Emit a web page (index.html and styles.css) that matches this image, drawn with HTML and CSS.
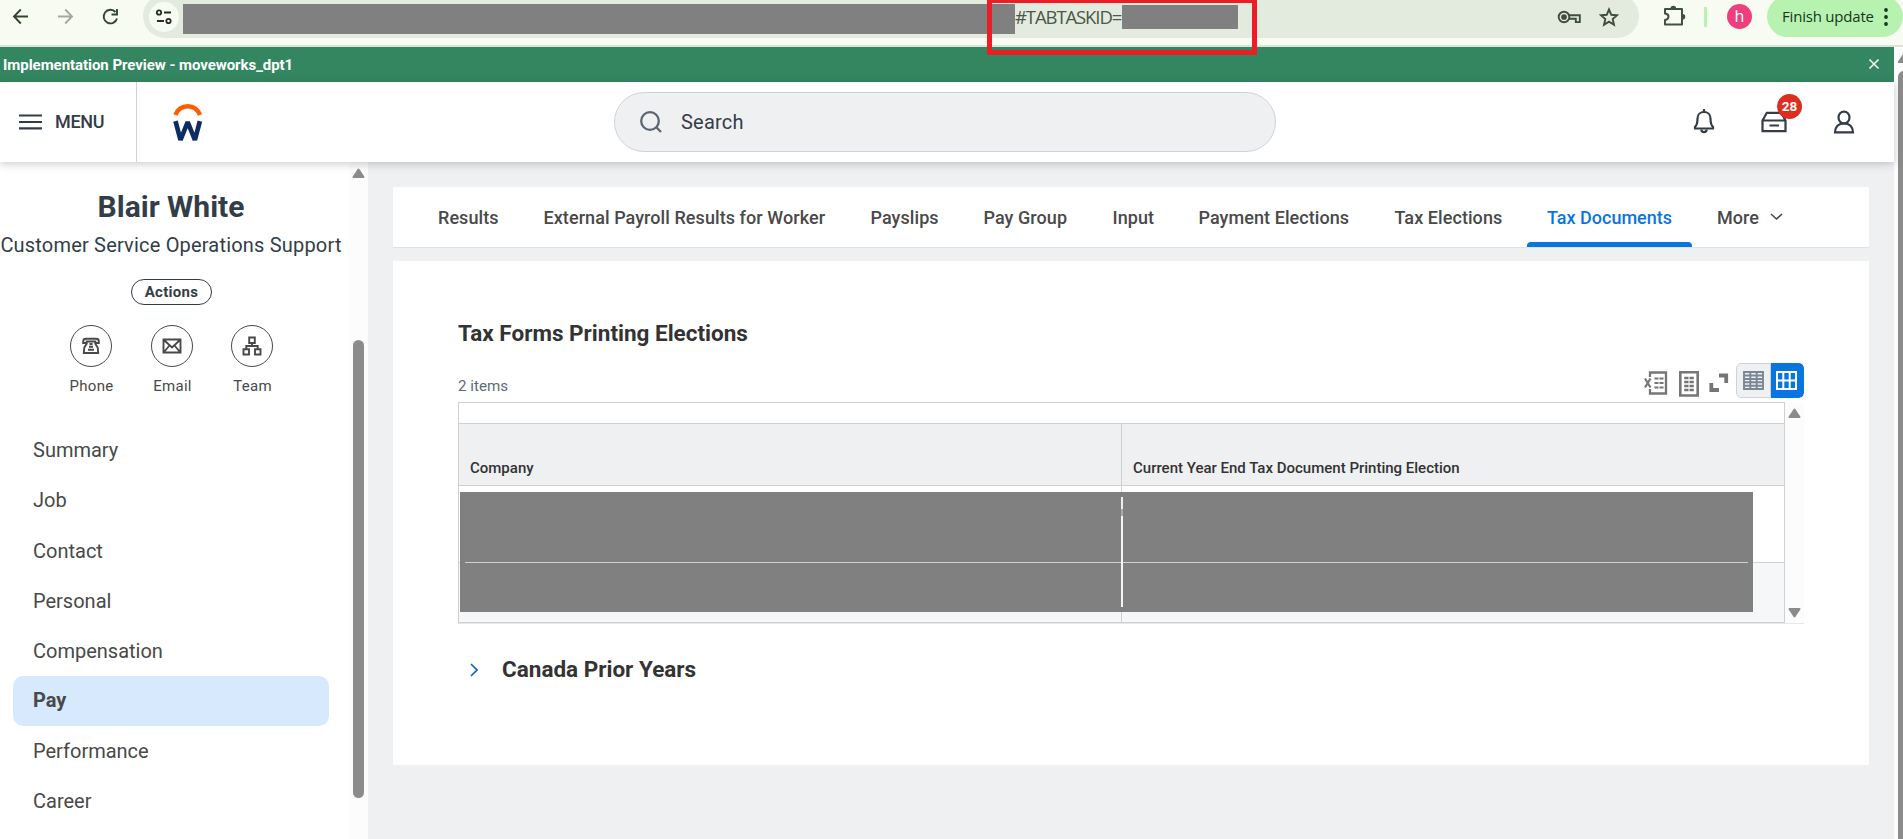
FILE: index.html
```html
<!DOCTYPE html>
<html lang="en">
<head>
<meta charset="utf-8">
<title>Blair White - Pay</title>
<link rel="stylesheet" href="styles.css">
</head>
<body>
<div class="browser">
  <svg class="nav-icons" width="143" height="45" viewBox="0 0 143 45" fill="none" stroke-width="1.9">
    <path stroke="#34452f" d="M28 16.5H14M20.8 9.5L14 16.5l6.800 7"/>
    <path stroke="#a3a99f" d="M58 16.500h14M65.200 9.500l6.800 7-6.800 7"/>
    <path stroke="#34452f" d="M117 18.500a6.800 6.800 0 1 1-1.500-6.500M117 9v5.500h-5.500"/>
  </svg>
  <div class="omnibox">
    <div class="site-info">
      <svg width="18" height="18" viewBox="0 0 18 18" fill="none" stroke="#20301d" stroke-width="1.800"><circle cx="4" cy="4.500" r="2.200"/><path d="M9 4.500h7M2 13h7"/><circle cx="13.500" cy="13" r="2.200"/></svg>
    </div>
    <div class="mask mask-url"></div>
    <span class="url-text">#TABTASKID=</span>
    <div class="mask mask-id"></div>
    <svg class="omni-icons" width="64" height="24" viewBox="0 0 64 24" fill="none" stroke="#3f4d3c" stroke-width="1.900">
      <circle cx="7" cy="12" r="5.300"/><circle cx="7" cy="12" r="1.900" fill="#3f4d3c"/>
      <path d="M12 10.200h10.800v6.900h-4v-3.400H12"/>
      <path d="M52 4.500l2.300 5.300 5.700.500-4.300 3.800 1.300 5.600-5-3-5 3 1.300-5.600-4.300-3.800 5.700-.500z"/>
    </svg>
  </div>
  <svg class="puzzle" width="24" height="24" viewBox="0 0 24 24"><path fill="none" stroke="#42503f" stroke-width="2" stroke-linejoin="round" d="M3 5h17v15.500H3V16c2.500-.500 3.500-1.700 3.500-3.300S5.500 9.800 3 9.500z"/><path fill="#42503f" d="M8.500 4.500a2.800 2.800 0 0 1 5.600 0zM20.500 10a2.800 2.800 0 0 1 0 5.600z"/></svg>
  <div class="separator"></div>
  <div class="avatar">h</div>
  <div class="update"><span>Finish update</span><svg width="4" height="20" viewBox="0 0 4 20" fill="#17361b"><circle cx="2" cy="3" r="1.900"/><circle cx="2" cy="10" r="1.900"/><circle cx="2" cy="17" r="1.900"/></svg></div>
  <div class="highlight"></div>
</div>

<div class="viewport">
  <div class="page">
    <div class="banner"><span>Implementation Preview - moveworks_dpt1</span>
      <svg width="12" height="12" viewBox="0 0 12 12" stroke="#fff" stroke-width="1.500"><path d="M1.500 1.500l9 9M10.500 1.500l-9 9"/></svg>
    </div>
    <header class="header">
      <div class="menu">
        <svg width="23" height="16" viewBox="0 0 23 16" stroke="#333d47" stroke-width="2.200"><path d="M0 1.500h23M0 8h23M0 14.300h23"/></svg>
        <span>MENU</span>
      </div>
      <svg class="logo" width="30" height="39" viewBox="0 0 30 39" fill="none"><path stroke="#ff5c00" stroke-width="4.400" d="M2.400 12C4.800 6.200 9.400 3.200 14.700 3.200S24.600 6.200 27 12"/><path stroke="#0e2c63" stroke-width="4.700" stroke-linejoin="bevel" d="M2.500 18.200L7.500 37 14.700 19 21.900 37l5-18.800"/></svg>
      <div class="search">
        <svg width="24" height="24" viewBox="0 0 24 24" fill="none" stroke="#5c6670" stroke-width="2.300"><circle cx="11" cy="11" r="8.800"/><path d="M17.300 17.300L22 22"/></svg>
        <span>Search</span>
      </div>
      <div class="tools">
        <svg width="22" height="26" viewBox="0 0 22 26" fill="none" stroke="#333d47" stroke-width="2.200"><path d="M2 20.500v-1.700c2-1.500 2.500-3.800 2.500-8.300C4.500 6.500 7.400 4 11 4s6.500 2.500 6.500 6.500c0 4.500.500 6.800 2.500 8.300v1.700z"/><path d="M11 4V1M8.300 21.500c0 3.400 5.400 3.400 5.400 0"/></svg>
        <div class="inbox">
          <svg width="26" height="22" viewBox="0 0 26 22" fill="none" stroke="#333d47" stroke-width="2.200"><path d="M1.500 9.500L5.800 1.800h14.400l4.300 7.700v10.700h-23zM1.500 9.500h23M8.500 14.500h9.500"/></svg>
          <span class="badge">28</span>
        </div>
        <svg width="22" height="24" viewBox="0 0 22 24" fill="none" stroke="#333d47" stroke-width="2.200"><ellipse cx="11" cy="7.600" rx="5.500" ry="6"/><path d="M2 22.300C2 17 5.500 13.300 11 13.300s9 3.700 9 9z"/></svg>
      </div>
    </header>

    <div class="body">
      <aside class="sidebar">
        <div class="profile">
          <h1 class="name">Blair White</h1>
          <div class="role">Customer Service Operations Support</div>
          <div class="actions">Actions</div>
          <div class="contacts">
            <div class="contact"><div class="ring"><svg width="18" height="18" viewBox="0 0 18 18" fill="none" stroke="#494949" stroke-width="1.900"><path d="M1.200 6V4.300C1.200 2.500 2.500 1.800 4 1.800h10c1.500 0 2.800.700 2.800 2.500V6h-3.500V4.500H4.700V6zM5 6.200L2.300 10.500 1.800 16h14.400l-.500-5.500L13 6.200M7.500 7h3M7 9.800h4M6 12.700h6"/></svg></div><span>Phone</span></div>
            <div class="contact"><div class="ring"><svg width="20" height="16" viewBox="0 0 20 16" fill="none" stroke="#494949" stroke-width="1.900"><path d="M1.500 1.500h17v13h-17zM2 2l8 7.500L18 2M2 14l5.500-6.500M18 14l-5.500-6.500"/></svg></div><span>Email</span></div>
            <div class="contact"><div class="ring"><svg width="20" height="20" viewBox="0 0 20 20" fill="none" stroke="#494949" stroke-width="1.900"><path d="M7.200 1.500h5.600v5.500H7.200zM1.500 13.200h5.500v5.300H1.500zM13 13.200h5.500v5.300H13zM10 7v3M4.300 13v-3h11.400v3"/></svg></div><span>Team</span></div>
          </div>
          <nav class="nav">
            <a>Summary</a><a>Job</a><a>Contact</a><a>Personal</a><a>Compensation</a><a class="current">Pay</a><a>Performance</a><a>Career</a>
          </nav>
        </div>
        <div class="side-scroll">
          <svg width="13" height="11" viewBox="0 0 13 11"><path fill="#8b8b8b" stroke="#8b8b8b" stroke-width="2" stroke-linejoin="round" d="M6.500 1.500L11.500 9h-10z"/></svg>
          <div class="side-thumb"></div>
        </div>
      </aside>

      <main class="main">
        <div class="tabs">
          <span class="tab t1">Results</span><span class="tab t2">External Payroll Results for Worker</span><span class="tab t3">Payslips</span><span class="tab t4">Pay Group</span><span class="tab t5">Input</span><span class="tab t6">Payment Elections</span><span class="tab t7">Tax Elections</span><span class="tab t8 active">Tax Documents</span><span class="tab t9">More<svg width="13" height="8" viewBox="0 0 13 8" fill="none" stroke="#494949" stroke-width="1.600"><path d="M1 1l5.500 5L12 1"/></svg></span>
        </div>
        <section class="panel">
          <h2 class="heading">Tax Forms Printing Elections</h2>
          <div class="toolbar">
            <span class="count">2 items</span>
            <svg class="i-excel" width="24" height="24" viewBox="0 0 24 24" fill="none" stroke="#757575"><path stroke-width="2.300" d="M6 6V1.500h16v21H6V18"/><path stroke-width="2.200" d="M1 7.500l5.500 9M6.500 7.500L1 16.500"/><path stroke-width="2.200" stroke-dasharray="4 1" d="M10.500 7.500h9M10.500 12h9M10.500 16.500h9"/></svg>
            <svg class="i-sheet" width="20" height="26" viewBox="0 0 20 26" fill="none" stroke="#757575"><path stroke-width="2.600" d="M1.300 1.300h17.400v23.200H1.300z"/><path stroke-width="2.500" stroke-dasharray="4.300 1" d="M5.200 7h9.600M5.200 11h9.600M5.200 15h9.600M5.200 19h9.600"/></svg>
            <svg class="i-expand" width="20" height="20" viewBox="0 0 20 20" fill="none" stroke="#757575" stroke-width="3.800"><path d="M10 2.500h7.200V10M2.300 10v7H10"/></svg>
            <div class="toggle">
              <div class="view"><svg width="21" height="19" viewBox="0 0 21 19" fill="none" stroke="#7b8794" stroke-width="1.900"><path d="M1 1h19v17H1zM7.300 1v17M13.700 1v17M1 4.500h19M1 8h19M1 11.300h19M1 14.700h19"/></svg></div>
              <div class="view on"><svg width="21" height="19" viewBox="0 0 21 19" fill="none" stroke="#fff" stroke-width="2"><path d="M1 1h19v17H1zM7.300 1v17M13.700 1v17M1 9.500h19"/></svg></div>
            </div>
          </div>
          <div class="grid">
            <div class="table">
              <div class="strip"></div>
              <div class="row head"><div>Company</div><div>Current Year End Tax Document Printing Election</div></div>
              <div class="row first"><div></div><div></div></div>
              <div class="row second"><div></div><div></div></div>
              <div class="cover"><div class="hline"></div><div class="vline"></div></div>
            </div>
            <div class="grid-scroll">
              <svg width="13" height="11" viewBox="0 0 13 11"><path fill="#8b8b8b" stroke="#8b8b8b" stroke-width="2" stroke-linejoin="round" d="M6.500 1.500L11.500 9h-10z"/></svg>
              <svg width="13" height="11" viewBox="0 0 13 11"><path fill="#8b8b8b" stroke="#8b8b8b" stroke-width="2" stroke-linejoin="round" d="M6.500 9.500L1.500 2h10z"/></svg>
            </div>
          </div>
          <div class="accordion">
            <svg width="8" height="14" viewBox="0 0 8 14" fill="none" stroke="#0b63c5" stroke-width="1.600"><path d="M1 1l6 6-6 6"/></svg>
            <h2>Canada Prior Years</h2>
          </div>
        </section>
      </main>
    </div>
  </div>
  <div class="page-scroll">
    <svg width="9" height="11" viewBox="0 0 9 11"><path fill="#8b8b8b" d="M9 1L4 8.500Q3 10 4.500 10H9z"/></svg>
    <div class="page-thumb"></div>
  </div>
</div>
</body>
</html>
```
FILE: styles.css
```css
* { box-sizing: border-box; }
body { margin: 0; width: 1903px; height: 839px; overflow: hidden; background: #fff; font-family: Roboto, sans-serif; color: #494949; }
svg { display: block; flex: none; }
h1, h2 { margin: 0; }

.browser { position: relative; display: flex; height: 47px; background: #f8fbf1; border-bottom: 2px solid #dde3d8; }
.browser > * { flex: none; }
.nav-icons { width: 143px; }
.omnibox { display: flex; width: 1496px; height: 44px; margin-top: -6px; padding: 0 10px 0 6px; border-radius: 22px; background: #e3ebdf; }
.omnibox > * { flex: none; }
.site-info { display: flex; align-items: center; justify-content: center; width: 30px; height: 30px; margin: 8px 4px 0 0; border-radius: 50%; background: #f8fbf1; }
.mask { background: #808080; }
.mask-url { width: 832px; height: 30px; margin-top: 10px; }
.url-text { width: 107px; margin-top: 9px; font: 18.500px/28px "Open Sans", sans-serif; letter-spacing: -1.100px; white-space: nowrap; color: #4b5748; }
.mask-id { width: 116px; height: 24px; margin-top: 11px; }
.omni-icons { margin: 11px 0 0 319px; }
.puzzle { margin: 4px 0 0 23px; }
.separator { width: 3px; height: 20px; margin: 7px 0 0 18px; background: #b7f2b1; }
.avatar { width: 25px; height: 25px; margin: 4px 0 0 20px; border-radius: 50%; background: #ee3e7b; color: #fff; font: 16px/24px "Open Sans", sans-serif; text-align: center; }
.update { display: flex; align-items: center; gap: 12px; width: 136px; height: 41px; margin: -4px 0 0 15px; padding-left: 15px; border-radius: 21px; background: #b7f2b1; color: #17361b; font: 15px/20px "Open Sans", sans-serif; letter-spacing: -.2px; white-space: nowrap; }
.update span { width: 90px; margin-top: -1px; }
.highlight { position: absolute; z-index: 2; left: 987px; top: -2px; width: 270px; height: 57px; border: 5px solid #ee1d24; }

.viewport { display: flex; height: 792px; }
.page { width: 1894px; display: flex; flex-direction: column; }
.page-scroll { width: 9px; background: #fcfcfc; padding-top: 6px; }
.page-thumb { width: 12px; height: 780px; margin: 7px 0 0 4px; border-radius: 6px; background: #8b8b8b; }
.banner { display: flex; justify-content: space-between; align-items: center; height: 35px; padding: 0 14px 0 3px; background: #338660; color: #fff; font-size: 15px; font-weight: 700; letter-spacing: -.050px; }
.banner svg { margin-top: -2px; }
.header { position: relative; z-index: 1; display: flex; height: 80px; background: #fff; box-shadow: 0 2px 8px rgba(40, 50, 60, .25); }
.menu { display: flex; align-items: center; gap: 14px; width: 137px; padding-left: 19px; border-right: 1px solid #ced3d9; font-size: 18px; font-weight: 500; letter-spacing: -.3px; color: #333d47; }
.menu span { margin: -1px 0 0 -1px; }
.logo { margin: 21px 0 0 36px; }
.search { display: flex; align-items: center; gap: 18px; width: 662px; height: 60px; margin: 10px 0 0 411px; padding-left: 24px; border: 1px solid #ced3d9; border-radius: 30px; background: #eff0f2; font-size: 20px; color: #333d47; letter-spacing: .2px; }
.tools { display: flex; margin-left: 417px; padding-top: 26px; gap: 46px; }
.tools > svg:last-child { margin-top: 2px; }
.inbox { position: relative; padding-top: 3px; }
.badge { position: absolute; left: 16px; top: -14px; width: 25px; height: 25px; border-radius: 50%; background: #de2e21; color: #fff; font-size: 13.500px; line-height: 24px; font-weight: 700; text-align: center; }

.body { display: flex; height: 677px; }
.sidebar { display: flex; width: 368px; }
.profile { width: 349px; }
.name { margin-top: 27px; width: 342px; text-align: center; font-size: 30px; line-height: 36px; font-weight: 700; color: #333d47; }
.role { width: 342px; margin-top: 8px; text-align: center; font-size: 20px; line-height: 24px; letter-spacing: .190px; white-space: nowrap; color: #333d47; }
.actions { width: 81px; height: 26px; margin: 22px 0 0 131px; border: 1px solid #333d47; border-radius: 13px; text-align: center; font-size: 15px; line-height: 24px; font-weight: 700; letter-spacing: .3px; color: #333d47; }
.contacts { display: flex; margin: 20px 0 0 51px; }
.contact { width: 80px; text-align: center; font-size: 15px; line-height: 20px; letter-spacing: .3px; }
.contact:first-child { margin-right: 1px; }
.contact span { margin-left: 1px; }
.ring { display: flex; align-items: center; justify-content: center; width: 42px; height: 42px; margin: 0 auto 9px; border: 1px solid #494949; border-radius: 50%; }
.nav { display: flex; flex-direction: column; margin-top: 29px; padding-left: 13px; }
.nav a { width: 316px; height: 50.200px; padding-left: 20px; border-radius: 10px; font-size: 20px; line-height: 50.500px; }
.nav a:nth-child(3) { line-height: 52px; }
.nav .current { background: #d7e9fd; font-weight: 700; line-height: 48px; }
.side-scroll { width: 19px; padding: 6px 0 0 3px; background: #fcfcfc; }
.side-thumb { width: 11px; height: 458px; margin: 161px 0 0 1px; border-radius: 6px; background: #8b8b8b; }

.main { width: 1526px; padding: 25px 25px 0 25px; background: #eff0f2; }
.tabs { display: flex; height: 61px; padding-left: 25px; background: #fff; border-bottom: 1px solid #dfe2e6; }
.tab { position: relative; display: flex; align-items: center; gap: 11px; flex: none; padding: 0 0 0 20px; font-size: 18px; font-weight: 500; letter-spacing: .070px; white-space: nowrap; }
.t1 { width: 105.500px; } .t2 { width: 327px; } .t3 { width: 113px; } .t4 { width: 129px; } .t5 { width: 86px; } .t6 { width: 196px; } .t7 { width: 152.500px; }
.t8 { width: 165px; margin-right: 5px; letter-spacing: 0; }
.active { color: #0875e1; }
.active::after { content: ""; position: absolute; left: 0; right: 0; bottom: 0; height: 5px; border-radius: 4px 4px 0 0; background: #0875e1; }
.panel { height: 504px; margin-top: 13px; padding: 56px 65px 0 65px; background: #fff; }
.heading, .accordion h2 { font-size: 22.500px; line-height: 32px; font-weight: 700; color: #333; }
.toolbar { display: flex; height: 53px; }
.count { width: 1186px; padding-top: 27px; font-size: 15.200px; line-height: 20px; color: #5e6a75; }
.i-excel { margin-top: 22px; } .i-sheet { margin: 22px 0 0 11px; } .i-expand { margin: 24px 0 0 10px; }
.toggle { display: flex; width: 68px; height: 35px; margin: 14px 0 0 7px; border-radius: 5px; overflow: hidden; }
.view { display: flex; align-items: center; justify-content: center; width: 35px; height: 35px; border: 1px solid #ced3d9; border-radius: 5px 0 0 5px; background: #eff0f2; }
.view.on { width: 33px; padding-right: 2px; border: 0; border-radius: 0 5px 5px 0; background: #0875e1; }
.grid { display: flex; width: 1346px; height: 222px; border-bottom: 1px solid #e5e7e9; }
.table { position: relative; width: 1327px; height: 221px; border: 1px solid #ced0d2; }
.strip { height: 20px; }
.row { display: grid; grid-template-columns: 663px 1fr; }
.row > div { border-top: 1px solid #ced0d2; padding-left: 11px; }
.row > div:first-child { border-right: 1px solid #ced0d2; }
.head { height: 62px; background: #eff0f2; font-size: 15px; line-height: 20px; font-weight: 500; color: #333; }
.head > div { padding-top: 34px; }
.first { height: 77px; }
.second { height: 60px; background: #f6f7f9; }
.cover { position: absolute; left: 1px; top: 89px; width: 1293px; height: 120px; background: #808080; }
.hline { position: absolute; left: 5px; top: 70px; width: 1283px; height: 1px; background: #ced0d2; }
.vline { position: absolute; left: 661px; top: 5px; width: 2px; height: 110px; background: linear-gradient(#eee 0 12px, #aaa 12px 19px, #f5f5f5 19px); }
.grid-scroll { display: flex; flex-direction: column; justify-content: space-between; width: 19px; padding: 6px 0 5px 3px; background: #fcfcfc; }
.accordion { display: flex; align-items: center; gap: 24px; margin: 29px 0 0 12px; }
.accordion svg { margin-top: 2px; }
```
